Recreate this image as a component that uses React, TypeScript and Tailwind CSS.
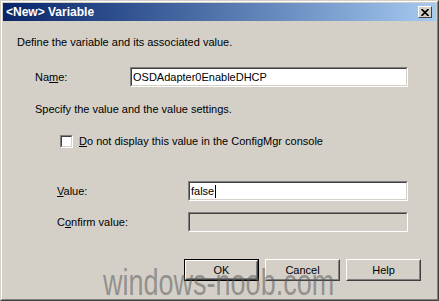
import React from "react";

function Sunken({ className = "", inner = "bg-white", children }: { className?: string; inner?: string; children?: React.ReactNode }) {
  return (
    <div className={`border border-t-[#808080] border-l-[#808080] border-r-white border-b-white ${className}`}>
      <div className={`h-full w-full border border-t-[#404040] border-l-[#404040] border-r-[#d4d0c8] border-b-[#d4d0c8] ${inner} flex items-center`}>
        {children}
      </div>
    </div>
  );
}

function Button({ label, isDefault = false }: { label: string; isDefault?: boolean }) {
  const raised = (
    <div className="h-full w-full border border-t-white border-l-white border-r-[#404040] border-b-[#404040]">
      <div className="h-full w-full border border-t-[#d4d0c8] border-l-[#d4d0c8] border-r-[#808080] border-b-[#808080] flex items-center justify-center bg-[#d4d0c8]">
        <span className="text-[11px] leading-none text-black">{label}</span>
      </div>
    </div>
  );
  return isDefault ? (
    <div className="w-[75px] h-[22px] border border-black">{raised}</div>
  ) : (
    <div className="w-[75px] h-[22px]">{raised}</div>
  );
}

export default function App() {
  return (
    <div
      className="relative w-[439px] h-[301px] overflow-hidden border border-t-[#d4d0c8] border-l-[#d4d0c8] border-r-[#404040] border-b-[#404040]"
      style={{ fontFamily: '"Liberation Sans", Arial, sans-serif' }}
    >
      <div className="h-full w-full border border-t-white border-l-white border-r-[#808080] border-b-[#808080] bg-[#d4d0c8] p-px flex flex-col">
        {/* Title bar */}
        <div className="h-[18px] shrink-0 flex items-center justify-between pl-[3px] pr-[4px] bg-linear-to-r from-[#0a246a] to-[#a6caf0]">
          <span className="text-white font-bold text-[12px] leading-none">&lt;New&gt; Variable</span>
          <div className="w-[14px] h-[12px] border border-t-white border-l-white border-r-[#404040] border-b-[#404040] bg-[#d4d0c8] flex items-center justify-center">
            <svg width="8" height="7" viewBox="0 0 8 7">
              <path d="M0.5 0 L7.5 7 M7.5 0 L0.5 7" stroke="black" strokeWidth="1.6" />
            </svg>
          </div>
        </div>

        {/* Body */}
        <div className="flex flex-col text-[11px] text-black">
          <div className="mt-[14px] h-[14px] leading-[14px] pl-[14px]">Define the variable and its associated value.</div>

          <div className="mt-[18px] h-[20px] flex items-center pl-[32px]">
            <span className="w-[95px]">
              Na<span className="underline">m</span>e:
            </span>
            <Sunken className="w-[278px] h-[20px]">
              <span className="pl-[1px] leading-none">OSDAdapter0EnableDHCP</span>
            </Sunken>
          </div>

          <div className="mt-[15px] h-[14px] leading-[14px] pl-[32px]">Specify the value and the value settings.</div>

          <div className="mt-[18px] h-[14px] flex items-center pl-[57px]">
            <Sunken className="w-[13px] h-[13px]" />
            <span className="ml-[6px] leading-[14px]">
              <span className="underline">D</span>o not display this value in the ConfigMgr console
            </span>
          </div>

          <div className="mt-[33px] h-[20px] flex items-center pl-[54px]">
            <span className="w-[131px]">
              <span className="underline">V</span>alue:
            </span>
            <Sunken className="w-[220px] h-[20px]">
              <span className="pl-[1px] leading-none">false</span>
              <span className="ml-px w-px h-[13px] bg-black" />
            </Sunken>
          </div>

          <div className="mt-[11px] h-[20px] flex items-center pl-[54px]">
            <span className="w-[131px]">
              C<span className="underline">o</span>nfirm value:
            </span>
            <Sunken className="w-[220px] h-[20px]" inner="bg-[#d4d0c8]" />
          </div>

          <div className="mt-[27px] flex gap-[6px] pl-[181px]">
            <Button label="OK" isDefault />
            <Button label="Cancel" />
            <Button label="Help" />
          </div>
        </div>
      </div>

      {/* Watermark */}
      <div className="absolute left-[102px] top-[263px] text-[37px] leading-none whitespace-nowrap origin-left scale-x-[0.73] text-[rgba(90,90,90,0.55)] pointer-events-none">
        windows-noob.com
      </div>
    </div>
  );
}
